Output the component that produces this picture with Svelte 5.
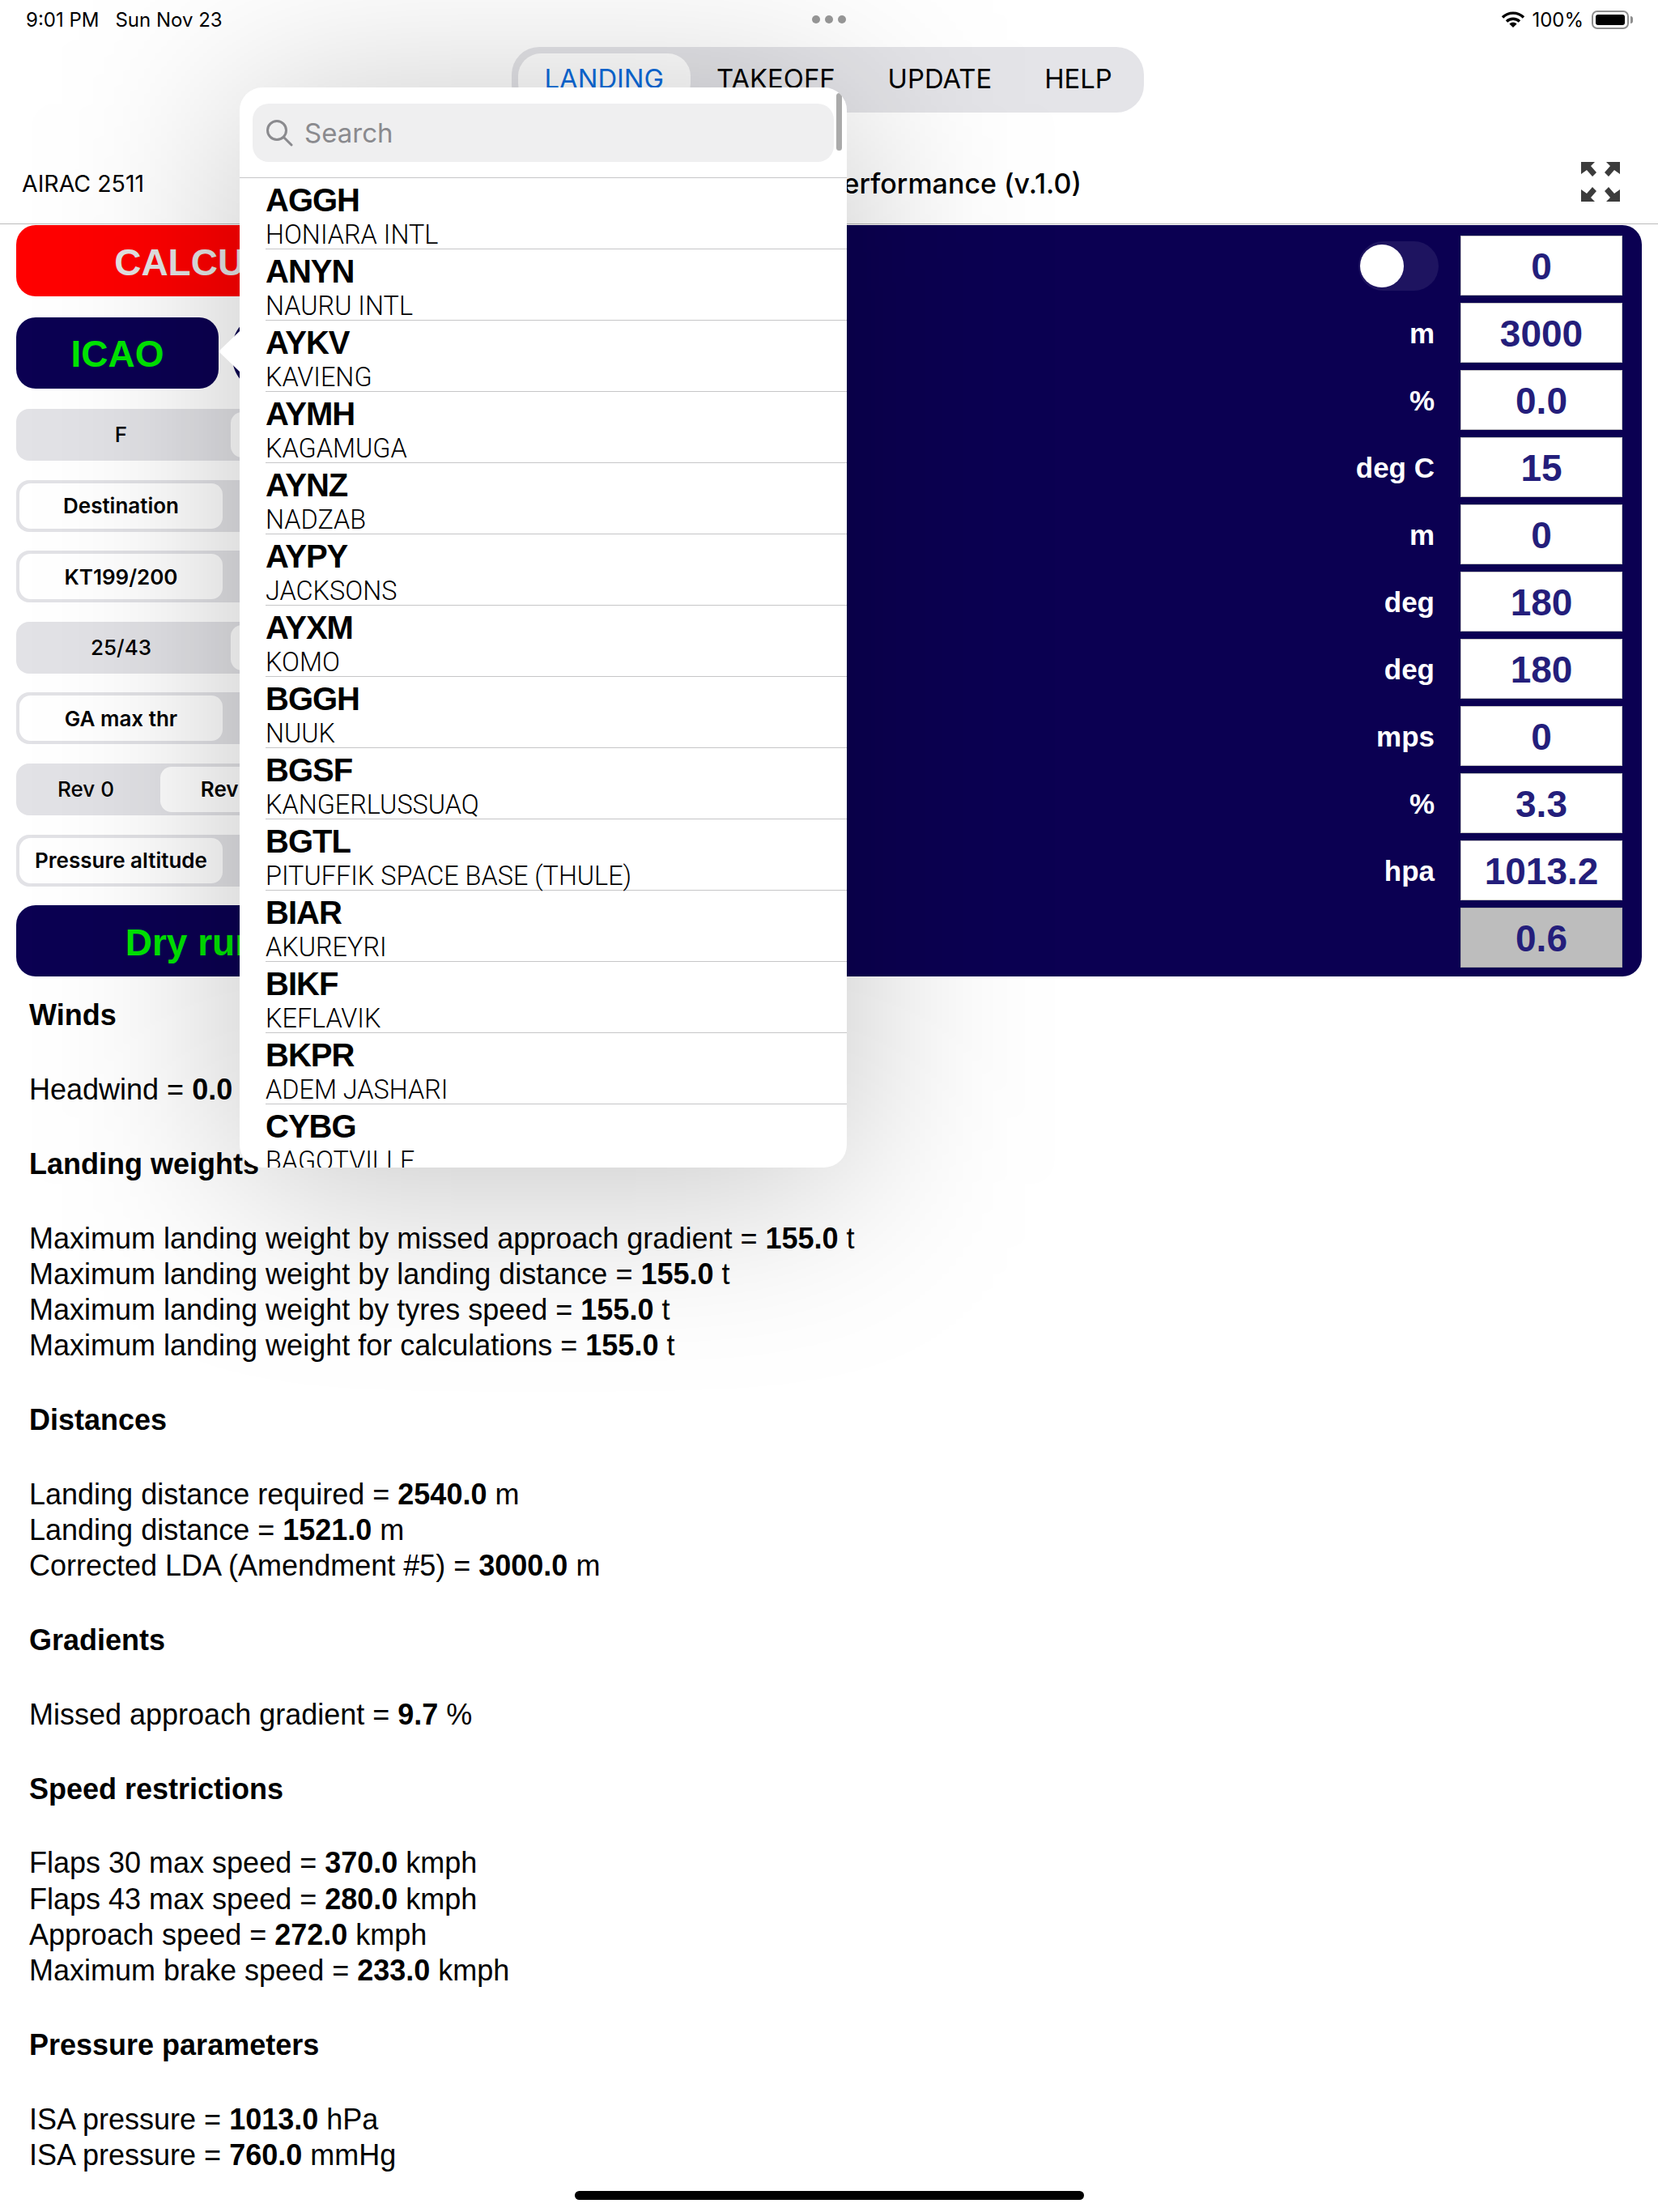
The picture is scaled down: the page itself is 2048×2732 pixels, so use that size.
<script>
    const tabs = ['LANDING', 'TAKEOFF', 'UPDATE', 'HELP'];
    const segments = [
        {options: ['F', 'S'], active: 1},
        {options: ['Destination', 'Alternate'], active: 0},
        {options: ['KT199/200', 'KT199/201'], active: 0},
        {options: ['25/43', '30'], active: 1},
        {options: ['GA max thr', 'GA TOGA'], active: 0},
        {options: ['Rev 0', 'Rev 1', 'Rev 2'], active: 1},
        {options: ['Pressure altitude', 'Elevation'], active: 0}
    ];
    const fields = [
        {unit: '', value: '0', toggle: true},
        {unit: 'm', value: '3000'},
        {unit: '%', value: '0.0'},
        {unit: 'deg C', value: '15'},
        {unit: 'm', value: '0'},
        {unit: 'deg', value: '180'},
        {unit: 'deg', value: '180'},
        {unit: 'mps', value: '0'},
        {unit: '%', value: '3.3'},
        {unit: 'hpa', value: '1013.2'},
        {unit: '', value: '0.6', readonly: true}
    ];
    const airports = [
        ['AGGH', 'HONIARA INTL'],
        ['ANYN', 'NAURU INTL'],
        ['AYKV', 'KAVIENG'],
        ['AYMH', 'KAGAMUGA'],
        ['AYNZ', 'NADZAB'],
        ['AYPY', 'JACKSONS'],
        ['AYXM', 'KOMO'],
        ['BGGH', 'NUUK'],
        ['BGSF', 'KANGERLUSSUAQ'],
        ['BGTL', 'PITUFFIK SPACE BASE (THULE)'],
        ['BIAR', 'AKUREYRI'],
        ['BIKF', 'KEFLAVIK'],
        ['BKPR', 'ADEM JASHARI'],
        ['CYBG', 'BAGOTVILLE']
    ];
    // each line: text before the number, number, unit
    const report = [
        {title: 'Winds', lines: [['Headwind = ', '0.0', '']]},
        {title: 'Landing weights', lines: [
            ['Maximum landing weight by missed approach gradient = ', '155.0', ' t'],
            ['Maximum landing weight by landing distance = ', '155.0', ' t'],
            ['Maximum landing weight by tyres speed = ', '155.0', ' t'],
            ['Maximum landing weight for calculations = ', '155.0', ' t']
        ]},
        {title: 'Distances', lines: [
            ['Landing distance required = ', '2540.0', ' m'],
            ['Landing distance = ', '1521.0', ' m'],
            ['Corrected LDA (Amendment #5) = ', '3000.0', ' m']
        ]},
        {title: 'Gradients', lines: [['Missed approach gradient = ', '9.7', ' %']]},
        {title: 'Speed restrictions', lines: [
            ['Flaps 30 max speed = ', '370.0', ' kmph'],
            ['Flaps 43 max speed = ', '280.0', ' kmph'],
            ['Approach speed = ', '272.0', ' kmph'],
            ['Maximum brake speed = ', '233.0', ' kmph']
        ]},
        {title: 'Pressure parameters', lines: [
            ['ISA pressure = ', '1013.0', ' hPa'],
            ['ISA pressure = ', '760.0', ' mmHg']
        ]}
    ];
</script>

<div class="screen">
    <div class="status">
        <span class="time">9:01 PM</span>
        <span>Sun Nov 23</span>
        <span class="dots"><i></i><i></i><i></i></span>
        <svg class="wifi" viewBox="0 0 28 20" width="28" height="20">
            <path d="M1 7.5a18.5 18.5 0 0 1 26 0" fill="none" stroke="#000" stroke-width="3.4"/>
            <path d="M6 12.5a11.5 11.5 0 0 1 16 0" fill="none" stroke="#000" stroke-width="3.4"/>
            <path d="M14 20l-4.6-4.6a6.6 6.6 0 0 1 9.2 0z"/>
        </svg>
        <span class="battery-text">100%</span>
        <span class="battery"><b></b></span>
    </div>

    <div class="tabs-row">
        <div class="tabs">
            {#each tabs as tab, i}
                <span class="tab" class:active={i === 0}>{tab}</span>
            {/each}
        </div>
    </div>

    <header>
        <span class="airac">AIRAC 2511</span>
        <span class="title">Performance (v.1.0)</span>
        <svg class="expand" viewBox="0 0 48 49" width="48" height="49" fill="#3c3c3c">
            <path d="M0 0h17l-5 5 7 8-5 5-7-8-7 5z"/>
            <path d="M48 0H31l5 5-7 8 5 5 7-8 7 5z"/>
            <path d="M0 49h17l-5-5 7-8-5-5-7 8-7-5z"/>
            <path d="M48 49H31l5-5-7-8 5-5 7 8 7-5z"/>
        </svg>
    </header>

    <main>
        <div class="left">
            <button class="big calc">CALCULATE</button>
            <div class="icao-row">
                <button class="big icao">ICAO</button>
                <span class="icao-value">CYBG</span>
            </div>
            {#each segments as seg}
                <div class="seg">
                    {#each seg.options as opt, i}
                        <span class="opt" class:on={i === seg.active}>{opt}</span>
                    {/each}
                </div>
            {/each}
            <button class="big dry">Dry runway</button>
        </div>
        <div class="panel">
            {#each fields as f}
                <div class="field">
                    {#if f.toggle}
                        <span class="toggle"><i></i></span>
                    {:else}
                        <span class="unit">{f.unit}</span>
                    {/if}
                    <span class="cell" class:readonly={f.readonly}>{f.value}</span>
                </div>
            {/each}
        </div>
    </main>

    <section class="report">
        {#each report as block}
            <div class="block">
                <h3>{block.title}</h3>
                <div>
                    {#each block.lines as line}
                        <p>{line[0]}<b>{line[1]}</b>{line[2]}</p>
                    {/each}
                </div>
            </div>
        {/each}
    </section>

    <div class="home"></div>

    <div class="popover-shadow"></div>
    <div class="popover">
        <span class="arrow"></span>
        <div class="pop-inner">
            <div class="search-wrap">
                <div class="search">
                    <svg viewBox="0 0 34 34" width="34" height="34" fill="none" stroke="#8a8a8e" stroke-width="3" stroke-linecap="round">
                        <circle cx="14" cy="14" r="11.5"/>
                        <path d="M22.5 22.5L32 32"/>
                    </svg>
                    <span>Search</span>
                </div>
            </div>
            {#each airports as a}
                <div class="row">
                    <div class="code">{a[0]}</div>
                    <div class="name">{a[1]}</div>
                </div>
            {/each}
            <span class="scroll"></span>
        </div>
    </div>
</div>

<style>
    :global(body) {
        margin: 0;
        background: #fff;
    }
    .screen {
        position: relative;
        width: 2048px;
        height: 2732px;
        overflow: hidden;
        background: #fff;
        color: #000;
        font-family: "Liberation Sans", sans-serif;
    }
    .status {
        height: 48px;
        padding: 0 32px;
        display: flex;
        align-items: center;
        font-family: Inter, sans-serif;
        font-size: 24px;
        box-sizing: border-box;
    }
    .time {
        margin-right: 20px;
    }
    .dots {
        margin-left: 728px;
        display: flex;
        gap: 6px;
    }
    .dots i {
        width: 10px;
        height: 10px;
        border-radius: 50%;
        background: #999;
    }
    .wifi {
        margin-left: auto;
    }
    .battery-text {
        margin-left: 9px;
    }
    .battery {
        margin: 0 4px 0 10px;
        width: 46px;
        height: 23px;
        padding: 3px;
        box-sizing: border-box;
        border: 2px solid #8e8e8e;
        border-radius: 7px;
        position: relative;
        display: flex;
    }
    .battery b {
        flex: 1;
        background: #000;
        border-radius: 3px;
    }
    .battery::after {
        content: '';
        position: absolute;
        right: -7px;
        top: 5px;
        width: 3px;
        height: 9px;
        background: #8e8e8e;
        border-radius: 0 3px 3px 0;
    }
    .tabs-row {
        margin-top: 10px;
        padding-left: 632px;
    }
    .tabs {
        display: inline-flex;
        height: 81px;
        padding: 8px 7px 8px 8px;
        box-sizing: border-box;
        border-radius: 34px;
        background: #e4e4e8;
        font-family: Inter, sans-serif;
        font-size: 32.8px;
    }
    .tab {
        padding: 0 32.5px 3px;
        display: flex;
        align-items: center;
        border-radius: 28px;
    }
    .tab.active {
        background: #fff;
        color: #0a6bdc;
    }
    header {
        height: 138px;
        box-sizing: border-box;
        padding: 38px 47px 0 27px;
        border-bottom: 1px solid #bbb;
        display: flex;
        align-items: center;
    }
    .airac {
        font-family: Inter, sans-serif;
        font-size: 28.5px;
    }
    .title {
        margin-left: auto;
        font-family: Inter, sans-serif;
        font-weight: 500;
        font-size: 34px;
    }
    .expand {
        margin: -4px 0 0 617px;
    }
    main {
        display: flex;
        gap: 20px;
        padding: 1px 20px 0;
    }
    .left {
        width: 520px;
        flex-shrink: 0;
        display: flex;
        flex-direction: column;
        gap: 23.6px;
    }
    .big {
        height: 88px;
        flex-shrink: 0;
        border: 0;
        border-radius: 24px;
        font-family: "Liberation Sans", sans-serif;
        font-weight: 700;
        font-size: 46px;
        padding: 3px 0 0;
    }
    .calc {
        background: #f00;
        color: #e4e4e4;
    }
    .dry {
        background: #0b0052;
        color: #00e600;
    }
    .icao-row {
        margin: 2.4px 0 1.4px;
        display: flex;
        align-items: center;
        gap: 11px;
    }
    .icao {
        width: 250px;
        background: #0b0052;
        color: #00e600;
    }
    .icao-value {
        font-weight: 700;
        font-size: 130px;
        line-height: 88px;
        color: #0b0052;
    }
    .seg {
        height: 64px;
        padding: 4px;
        box-sizing: border-box;
        display: flex;
        gap: 10px;
        border-radius: 16px;
        background: #e2e2e6;
        font-family: Inter, sans-serif;
        font-size: 26px;
        font-weight: 500;
    }
    .opt {
        flex: 1;
        display: flex;
        align-items: center;
        justify-content: center;
        border-radius: 14px;
    }
    .opt.on {
        background: #fff;
        font-weight: 600;
    }
    .panel {
        flex: 1;
        padding: 13px 24px 11px 0;
        display: flex;
        flex-direction: column;
        gap: 9px;
        background: #0b0052;
        border-radius: 0 24px 24px 0;
    }
    .field {
        display: flex;
        justify-content: flex-end;
        align-items: center;
        gap: 32px;
        height: 74px;
    }
    .unit {
        padding-top: 2px;
        color: #fff;
        font-weight: 700;
        font-size: 35px;
    }
    .toggle {
        width: 99px;
        height: 61px;
        margin-right: -5px;
        padding: 4px 2px;
        box-sizing: border-box;
        border-radius: 31px;
        background: #1e1460;
    }
    .toggle i {
        display: block;
        width: 54px;
        height: 53px;
        border-radius: 50%;
        background: #fff;
    }
    .cell {
        width: 200px;
        height: 74px;
        padding-top: 2px;
        box-sizing: border-box;
        border: 1px solid #c4c4c4;
        background: #fff;
        color: #241e7b;
        font-weight: 700;
        font-size: 46px;
        display: flex;
        align-items: center;
        justify-content: center;
    }
    .cell.readonly {
        background: #bdbdbd;
        border-color: #a8a8a8;
    }
    .report {
        padding: 26px 36px 0;
        display: flex;
        flex-direction: column;
        gap: 47.6px;
        font-size: 36px;
        line-height: 44.2px;
    }
    .block {
        display: flex;
        flex-direction: column;
        gap: 47.6px;
    }
    h3 {
        margin: 0;
        font-size: 36px;
        font-weight: 700;
    }
    p {
        margin: 0;
    }
    .home {
        position: absolute;
        left: 710px;
        top: 2706px;
        width: 629px;
        height: 11px;
        border-radius: 6px;
        background: #000;
    }
    .popover-shadow {
        position: absolute;
        left: 296px;
        top: 128px;
        width: 750px;
        height: 1334px;
        border-radius: 28px;
        background: rgba(0, 0, 0, 0.24);
        filter: blur(120px);
    }
    .popover {
        position: absolute;
        left: 296px;
        top: 108px;
        width: 750px;
        height: 1334px;
        border-radius: 28px;
        background: #fff;
    }
    .pop-inner {
        position: relative;
        height: 100%;
        overflow: hidden;
        border-radius: 28px;
    }
    .arrow {
        position: absolute;
        left: -26px;
        top: 301px;
        width: 26px;
        height: 50px;
        background: #fff;
        clip-path: polygon(100% 0, 0 50%, 100% 100%);
    }
    .search-wrap {
        height: 112px;
        padding: 20px 16px 0;
        box-sizing: border-box;
        border-bottom: 1px solid #c6c6c8;
    }
    .search {
        height: 72px;
        padding-left: 16px;
        display: flex;
        align-items: center;
        gap: 14px;
        border-radius: 20px;
        background: #efeff0;
        color: #8a8a8e;
        font-family: Inter, sans-serif;
        font-size: 33px;
    }
    .row {
        height: 88px;
        box-sizing: border-box;
        margin-left: 32px;
        padding-top: 5px;
        border-bottom: 1px solid #c6c6c8;
    }
    .code {
        font-weight: 700;
        font-size: 40px;
        line-height: 44px;
        letter-spacing: -1px;
    }
    .name {
        margin-top: 3px;
        font-family: Roboto, sans-serif;
        font-weight: 300;
        font-size: 32.4px;
        line-height: 36px;
    }
    .scroll {
        position: absolute;
        right: 6px;
        top: 7px;
        width: 7px;
        height: 71px;
        border-radius: 4px;
        background: #aaa;
    }
</style>
